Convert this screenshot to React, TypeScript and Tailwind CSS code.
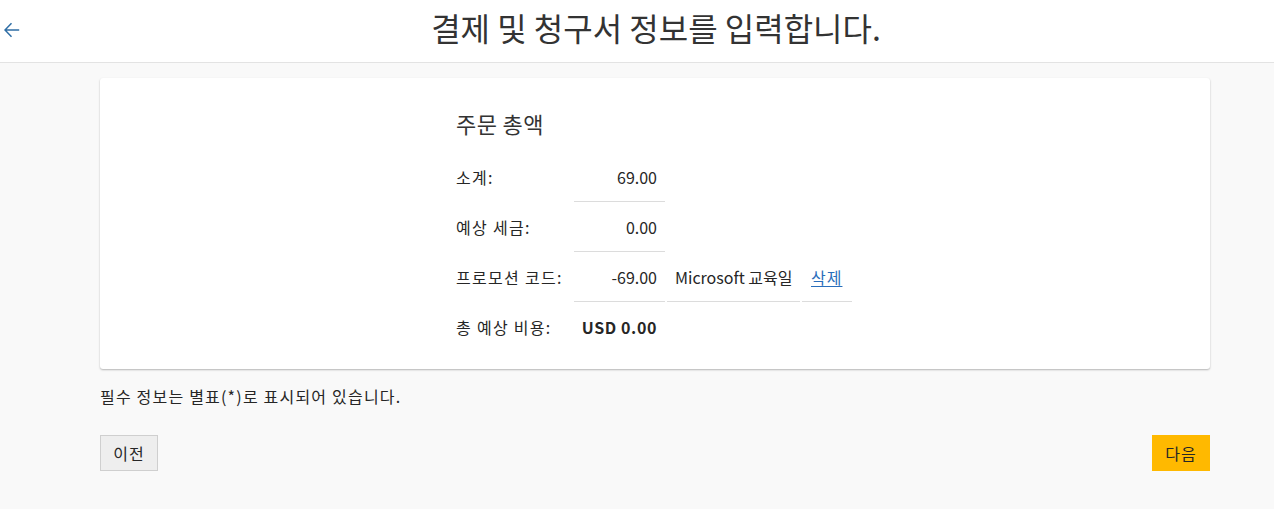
import React from "react";

const font = { fontFamily: '"Noto Sans CJK KR", "Noto Sans", sans-serif' };

function BackArrow() {
  return (
    <svg className="h-[16px] w-[16px]" viewBox="0 0 16 16" fill="none" aria-hidden="true">
      <path d="M15.2 8H1M7.5 1.3 1 8l6.5 6.7" stroke="#2f6ea5" strokeWidth="1.5" strokeLinejoin="miter" />
    </svg>
  );
}

type Row = { label: string; value: string; bold?: boolean; promo?: boolean; border?: boolean };

const rows: Row[] = [
  { label: "소계:", value: "69.00", border: true },
  { label: "예상 세금:", value: "0.00", border: true },
  { label: "프로모션 코드:", value: "-69.00", promo: true, border: true },
  { label: "총 예상 비용:", value: "USD 0.00", bold: true },
];

export default function App() {
  return (
    <div className="min-h-[509px] bg-[#f9f9f9] text-[#262626]" style={font}>
      <header className="relative flex h-[63px] items-center justify-center border-b border-[#e3e3e3] bg-white">
        <button className="absolute left-[4px] top-[22px] p-0">
          <BackArrow />
        </button>
        <h1 className="-mt-[8px] pl-[38px] text-[32px] font-normal leading-none text-[#333]">
          결제 및 청구서 정보를 입력합니다.
        </h1>
      </header>

      <main className="pl-[100px] pr-[64px] pt-[15px]">
        <section className="rounded-[3px] bg-white pb-[17px] pl-[356px] pt-[31px] shadow-[0_1px_2px_rgba(0,0,0,0.28)]">
          <h2 className="mb-[15px] text-[22px] leading-[28px] tracking-[0.4px] text-[#333]">주문 총액</h2>
          <div className="grid grid-cols-[118px_91px_2px_133px_2px_50px] text-[16px]">
            {rows.map((r) => (
              <React.Fragment key={r.label}>
                <div className="flex h-[50px] items-center whitespace-nowrap tracking-[1.3px]">{r.label}</div>
                <div
                  className={`flex h-[50px] items-center justify-end whitespace-nowrap pr-[8px] ${r.border ? "border-b border-[#dcdcdc]" : ""} ${r.bold ? "font-bold tracking-[0.6px]" : ""}`}
                >
                  {r.value}
                </div>
                <div />
                {r.promo ? (
                  <>
                    <div className="flex h-[50px] items-center whitespace-nowrap border-b border-[#dcdcdc] pl-[8px]">Microsoft 교육일</div>
                    <div />
                    <div className="flex h-[50px] items-center border-b border-[#dcdcdc] pl-[9px]">
                      <a href="#" className="tracking-[1px] text-[#2a6ebb] underline underline-offset-2">삭제</a>
                    </div>
                  </>
                ) : (
                  <>
                    <div />
                    <div />
                    <div />
                  </>
                )}
              </React.Fragment>
            ))}
          </div>
        </section>

        <p className="mt-[16px] text-[16px] leading-[22px] tracking-[1.2px]">필수 정보는 별표(*)로 표시되어 있습니다.</p>

        <div className="mt-[28px] flex items-center justify-between">
          <button className="h-[36px] w-[58px] border border-[#cfcfcf] bg-[#eeeeee] text-[16px] tracking-[1px]">이전</button>
          <button className="h-[36px] w-[58px] bg-[#ffb900] text-[16px] tracking-[1px]">다음</button>
        </div>
      </main>
    </div>
  );
}
